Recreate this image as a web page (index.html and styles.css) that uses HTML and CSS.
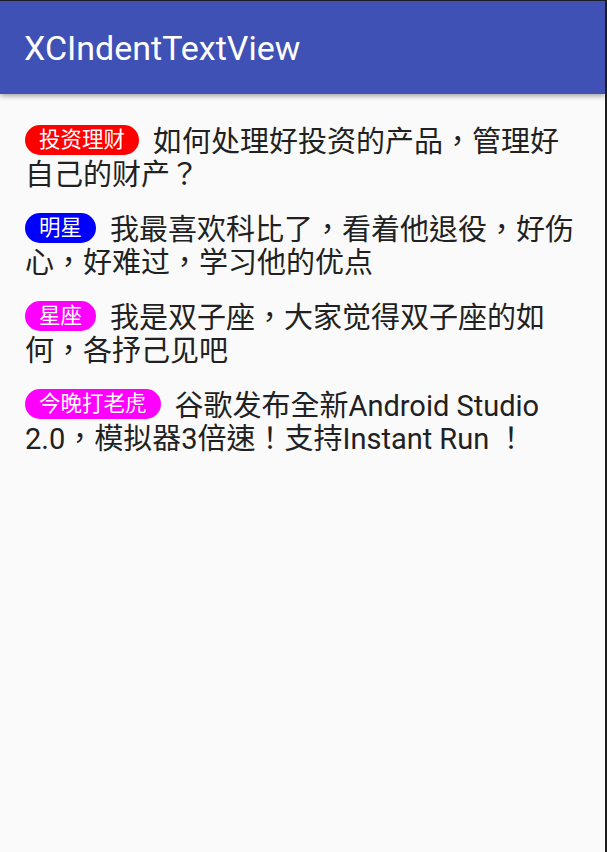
FILE: index.html
```html
<!DOCTYPE html>
<html>
<head>
<meta charset="utf-8">
<link rel="stylesheet" href="styles.css">
</head>
<body>
<div class="frame">
  <header class="appbar">
    <h1 class="title">XCIndentTextView</h1>
  </header>
  <main class="content">
    <p class="item"><span class="tag tag-red">投资理财</span>如何处理好投资的产品，管理好<br>自己的财产？</p>
    <p class="item"><span class="tag tag-blue">明星</span>我最喜欢科比了，看着他退役，好伤<br>心，好难过，学习他的优点</p>
    <p class="item"><span class="tag tag-pink">星座</span>我是双子座，大家觉得双子座的如<br>何，各抒己见吧</p>
    <p class="item"><span class="tag tag-pink">今晚打老虎</span>谷歌发布全新Android Studio<br>2.0，模拟器3倍速！支持Instant Run ！</p>
  </main>
</div>
</body>
</html>
```

FILE: styles.css
```css
html, body {
  margin: 0;
  padding: 0;
}
body {
  background: #fafafa;
  font-family: Roboto, "Noto Sans CJK TC", sans-serif;
}
.frame {
  height: 852px;
  box-sizing: border-box;
  border-top: 1px solid #1c1c2a;
  border-right: 2px solid #1e1e1e;
  background: #fafafa;
  overflow: hidden;
}
.appbar {
  height: 93px;
  background: #3f51b5;
  display: flex;
  align-items: center;
  padding-left: 24px;
  box-shadow: 0 2px 5px rgba(0,0,0,0.35);
  position: relative;
}
.title {
  margin: 0;
  color: #ffffff;
  font-family: Roboto, sans-serif;
  font-weight: 400;
  font-size: 34px;
}
.content {
  padding: 32px 24px 0 25px;
}
.item {
  margin: 0 0 22px 0;
  font-size: 29px;
  line-height: 33px;
  color: #212121;
  white-space: nowrap;
}
.tag {
  display: inline-block;
  vertical-align: 5px;
  height: 30px;
  line-height: 30px;
  padding: 0 14px;
  margin: -10px 14px -10px 0;
  border-radius: 15px;
  color: #ffffff;
  font-size: 21.5px;
}
.tag-red { background: #ff0000; }
.tag-blue { background: #0000ff; }
.tag-pink { background: #ff00ff; }
```
